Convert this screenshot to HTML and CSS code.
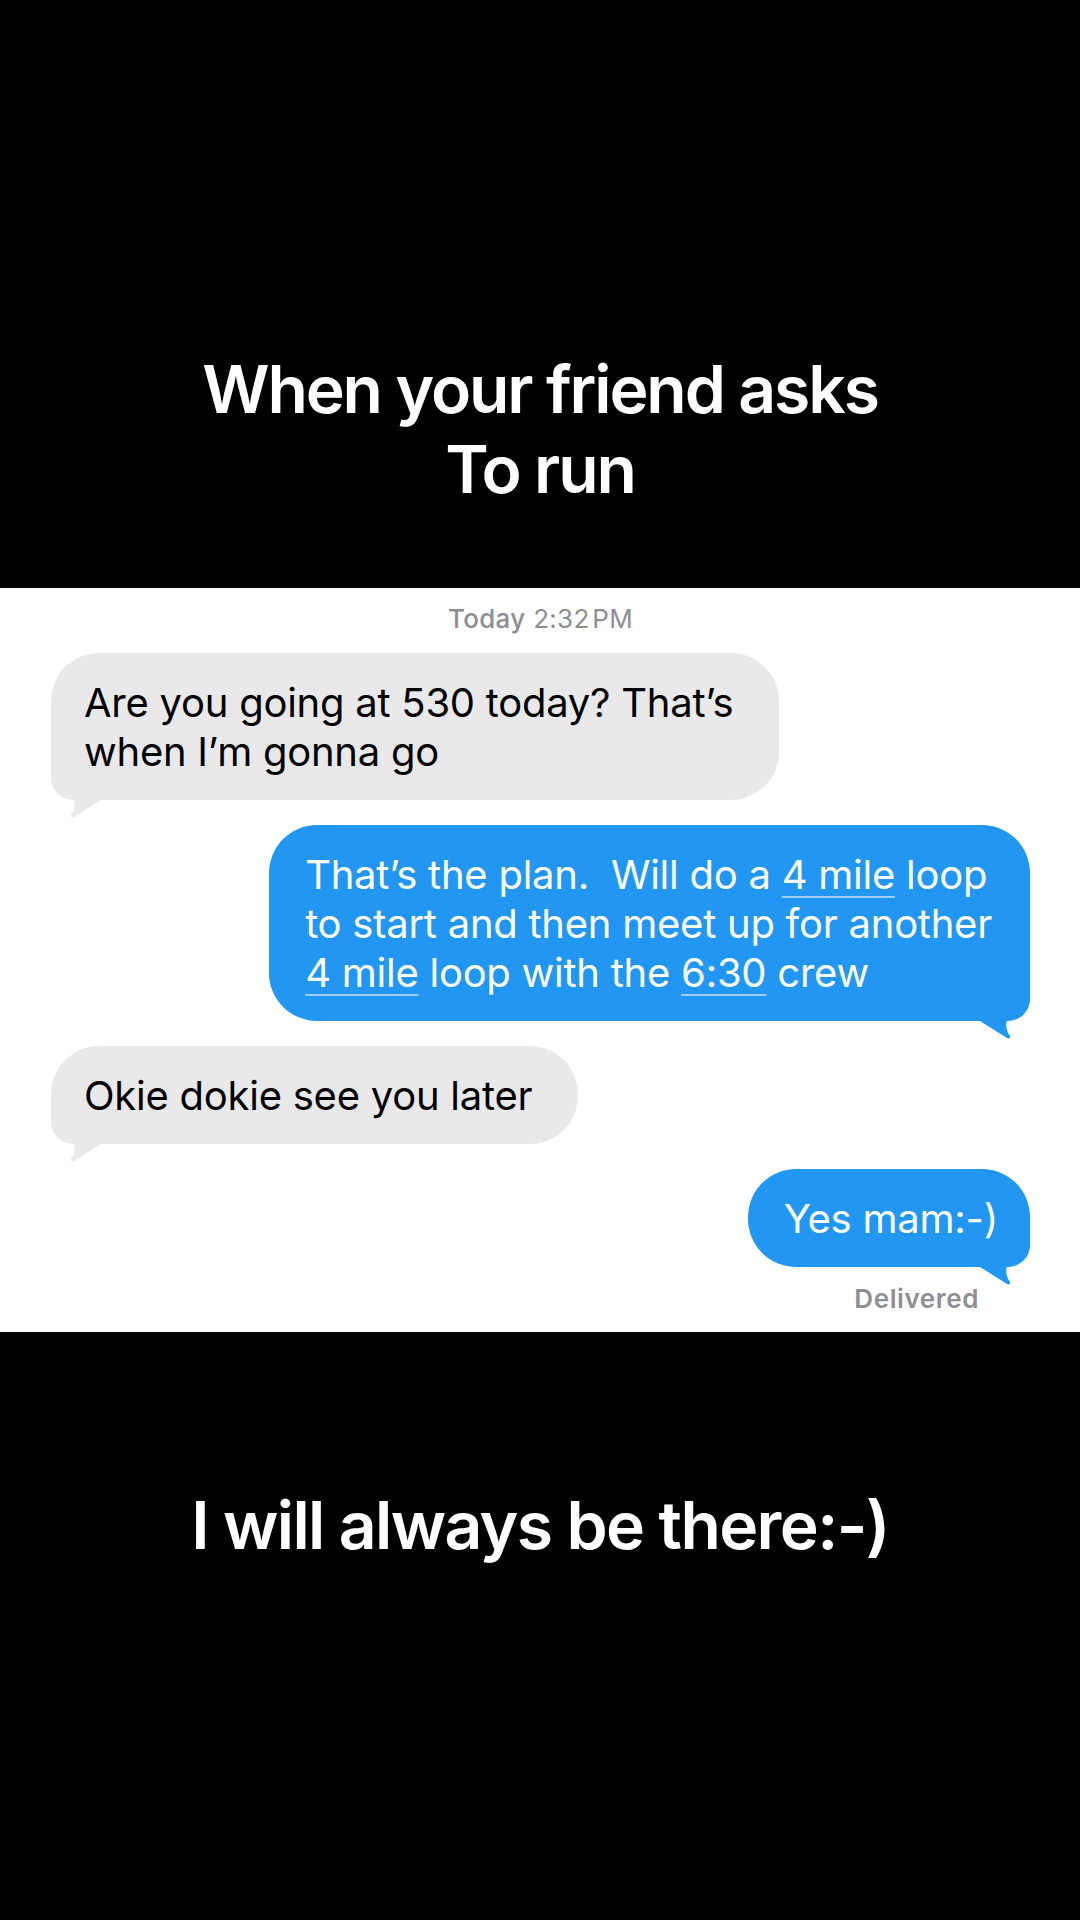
FILE: index.html
```html
<!DOCTYPE html>
<html>
<head>
    <meta charset="UTF-8">
    <title>To run</title>
    <link rel="stylesheet" href="styles.css">
</head>
<body>

<div class="caption caption-top">
    <p>When your friend asks<br>To run</p>
</div>

<div class="chat">
    <div class="stamp"><b>Today</b> 2:32&#8202;PM</div>

    <div class="msg in">
        <div class="bubble">Are you going at 530 today? That’s<br>when I’m gonna go
            <svg class="tail" viewBox="0 0 56 40"><path d="M54 0 C53 10 38 13 32 19 C29 24 30 32 34 37 C35 39 33 40 31 39 L4 22 L4 0 Z"/></svg>
        </div>
    </div>

    <div class="msg out">
        <div class="bubble">That’s the plan.&nbsp; Will do a <u>4 mile</u> loop<br>to start and then meet up for another<br><u>4 mile</u> loop with the <u>6:30</u> crew
            <svg class="tail" viewBox="0 0 56 40"><path d="M54 0 C53 10 38 13 32 19 C29 24 30 32 34 37 C35 39 33 40 31 39 L4 22 L4 0 Z"/></svg>
        </div>
    </div>

    <div class="msg in">
        <div class="bubble">Okie dokie see you later
            <svg class="tail" viewBox="0 0 56 40"><path d="M54 0 C53 10 38 13 32 19 C29 24 30 32 34 37 C35 39 33 40 31 39 L4 22 L4 0 Z"/></svg>
        </div>
    </div>

    <div class="msg out last">
        <div class="bubble">Yes mam:-)
            <svg class="tail" viewBox="0 0 56 40"><path d="M54 0 C53 10 38 13 32 19 C29 24 30 32 34 37 C35 39 33 40 31 39 L4 22 L4 0 Z"/></svg>
        </div>
    </div>
    <div class="status">Delivered</div>
</div>

<div class="caption caption-bottom">
    <p>I will always be there:-)</p>
</div>

</body>
</html>
```

FILE: styles.css
```css
* { margin: 0; padding: 0; box-sizing: border-box;}
body { width: 1080px; background: #000; font-family: Inter, "Noto Sans", sans-serif;}

.caption { color: #fff; text-align: center; font-size: 66px; font-weight: 600; line-height: 80px; letter-spacing: -2.1px;}
.caption-top { height: 588px; padding-top: 349px;}
.caption-bottom { height: 588px; padding-top: 153px; letter-spacing: -1.6px;}

.chat { background: #fff; height: 744px; padding: 16px 50px 0 51px; display: flex; flex-direction: column;}
.stamp { text-align: center; color: #8e8e93; font-size: 26px; line-height: 30px; letter-spacing: 0.3px; margin-bottom: 19px;}
.stamp b { font-weight: 500;}

.msg { display: flex; margin-bottom: 25px;}
.msg.in { justify-content: flex-start;}
.msg.out { justify-content: flex-end;}
.msg.last { margin-bottom: 0;}

.bubble { position: relative; font-size: 40px; line-height: 49px; letter-spacing: -0.25px; padding: 25px 46px 24px 33px; border-radius: 48px; white-space: nowrap;}
.in .bubble { background: #e9e9eb; color: #000; border-bottom-left-radius: 22px;}
.out .bubble { background: #2196f3; color: #fff; padding: 25px 38px 24px 36px; border-bottom-right-radius: 22px;}
.last .bubble { padding-right: 32px;}
.out .bubble u { text-decoration-color: rgba(255,255,255,0.55); text-decoration-thickness: 2px; text-underline-offset: 7px;}

.tail { position: absolute; bottom: -18px; width: 56px; height: 40px;}
.in .tail { left: -2px; transform: scaleX(-1); fill: #e9e9eb;}
.out .tail { right: -2px; fill: #2196f3;}

.status { align-self: flex-end; margin: 17px 51px 0 0; color: #8e8e93; font-size: 26px; font-weight: 600; line-height: 30px; letter-spacing: 0.6px;}
```
